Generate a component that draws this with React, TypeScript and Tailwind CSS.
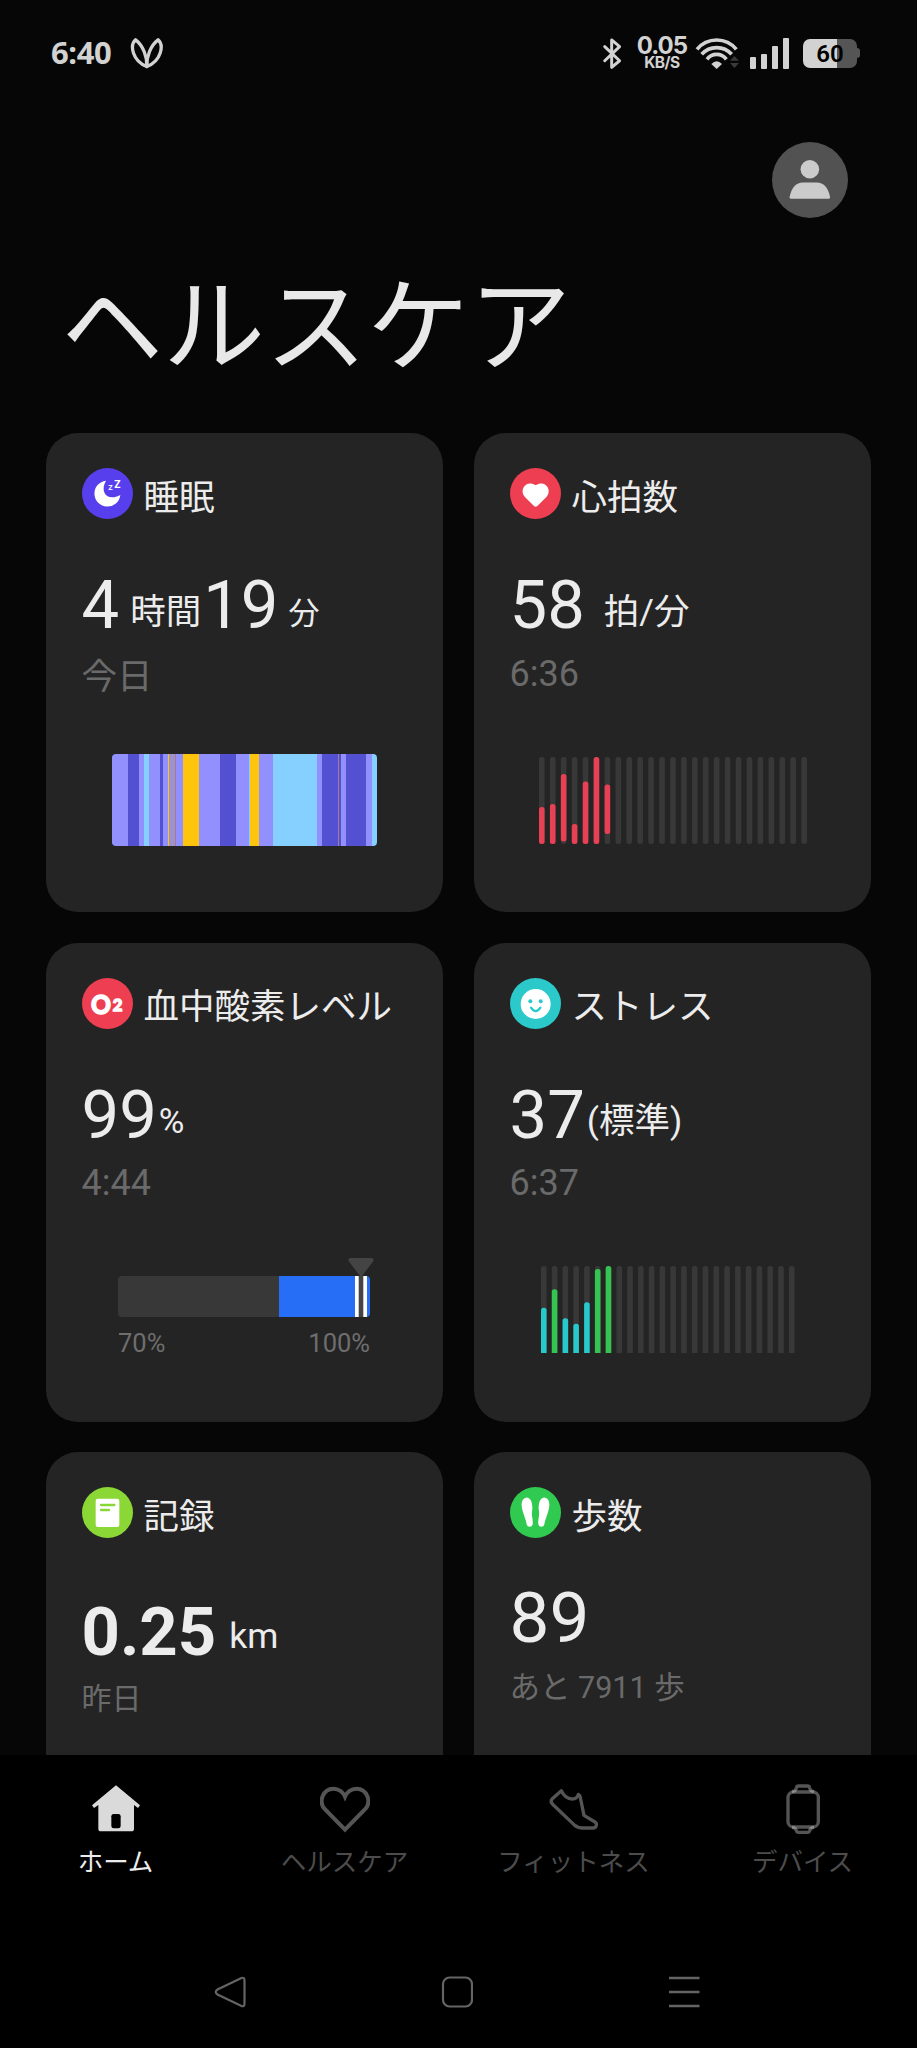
import type { ReactNode } from "react";

const sleepStages = [
  { stage: "light", span: 48 },
  { stage: "deep", span: 32 },
  { stage: "light", span: 15 },
  { stage: "rem", span: 16 },
  { stage: "light", span: 34 },
  { stage: "deep", span: 8 },
  { stage: "light", span: 14 },
  { stage: "awake", span: 5 },
  { stage: "mixed", span: 17 },
  { stage: "brief", span: 3 },
  { stage: "light", span: 21 },
  { stage: "awake", span: 48 },
  { stage: "light", span: 62 },
  { stage: "deep", span: 50 },
  { stage: "light", span: 37 },
  { stage: "rem", span: 4 },
  { stage: "awake", span: 28 },
  { stage: "light", span: 40 },
  { stage: "rem", span: 133 },
  { stage: "light", span: 16 },
  { stage: "deep", span: 48 },
  { stage: "brief", span: 3 },
  { stage: "deep", span: 4 },
  { stage: "light", span: 17 },
  { stage: "deep", span: 59 },
  { stage: "light", span: 18 },
  { stage: "rem", span: 15 },
];

const stageColors: Record<string, string> = {
  light: "bg-[#9290ff]",
  deep: "bg-[#5450d2]",
  rem: "bg-[#86d0ff]",
  awake: "bg-[#ffc40e]",
  mixed: "bg-[#9d92cf]",
  brief: "bg-[#a87c86]",
};

const heartBars = [
  { top: 50, bottom: 87, color: "#e84055" },
  { top: 47, bottom: 87, color: "#e84055" },
  { top: 17, bottom: 84.5, color: "#e84055" },
  { top: 67, bottom: 87, color: "#e84055" },
  { top: 24.5, bottom: 87, color: "#e84055" },
  { top: 0, bottom: 87, color: "#e84055" },
  { top: 27.5, bottom: 77, color: "#e84055" },
];

const stressBars = [
  { top: 41.7, bottom: 87, color: "#28c9cb" },
  { top: 23.3, bottom: 87, color: "#35c352" },
  { top: 52.3, bottom: 87, color: "#28c9cb" },
  { top: 57.7, bottom: 87, color: "#28c9cb" },
  { top: 36.3, bottom: 87, color: "#28c9cb" },
  { top: 3, bottom: 87, color: "#35c352" },
  { top: 0, bottom: 87, color: "#35c352" },
];

function StatusBar() {
  return (
    <div className="flex h-[106px] shrink-0 items-center justify-between pr-[57px] pl-[51px]">
      <div className="flex items-center gap-[19px]">
        <span className="pb-[2px] font-['Noto_Sans'] text-[31px] leading-none font-bold tracking-[-0.4px] text-[#d2d2d2]">
          6:40
        </span>
        <svg
          width="33"
          height="32"
          viewBox="0 0 100 96"
          fill="none"
          stroke="#d2d2d2"
          strokeWidth="10"
          strokeLinejoin="round"
        >
          <path d="M17 8C-2 25 8 72 51 89C52 60 40 25 17 8Z" />
          <path d="M85 8C104 25 94 72 51 89C50 60 62 25 85 8Z" />
        </svg>
      </div>
      <div className="flex items-center">
        <svg
          width="20"
          height="33"
          viewBox="0 0 60 100"
          fill="none"
          stroke="#d2d2d2"
          strokeWidth="9"
          strokeLinecap="round"
          strokeLinejoin="round"
        >
          <path d="M8 29L53 72L29 92V9L53 29L8 72" />
        </svg>
        <div className="ml-[14px] flex w-[52px] flex-col items-center pt-[1px] font-['Inter'] font-bold text-[#d2d2d2]">
          <span className="text-[24px] leading-[18px] tracking-[-1px]">
            0.05
          </span>
          <span className="text-[15.5px] leading-[15px] tracking-[-0.5px]">
            KB/S
          </span>
        </div>
        <svg
          className="ml-[7px]"
          width="45"
          height="33"
          viewBox="0 0 135 99"
          fill="none"
          stroke="#d2d2d2"
          strokeWidth="11"
        >
          <path d="M6 37A76 76 0 0 1 124 37" />
          <path d="M20 52A60 60 0 0 1 110 52" />
          <path d="M36 67A36 36 0 0 1 94 67" />
          <path d="M65 96L49 81Q65 64 81 81Z" fill="#d2d2d2" stroke="none" />
          <path d="M105 71L118 57L132 71ZM105 78L118 93L132 78Z" fill="#3a3a3a" stroke="none" />
        </svg>
        <div className="ml-[10px] flex h-[31px] items-end gap-[5px]">
          <span className="h-[12px] w-[6px] rounded-[1px] bg-[#d2d2d2]" />
          <span className="h-[15px] w-[6px] rounded-[1px] bg-[#d2d2d2]" />
          <span className="h-[23px] w-[6px] rounded-[1px] bg-[#d2d2d2]" />
          <span className="h-[31px] w-[6px] rounded-[1px] bg-[#d2d2d2]" />
        </div>
        <div className="ml-[14px] flex items-center">
          <div className="flex h-[29px] w-[54px] items-center justify-center rounded-[7px] bg-linear-to-r from-[#d2d2d2] from-[34px] to-[#555] to-[34px] pt-[2px] font-['Roboto'] text-[24px] leading-none font-semibold text-black">
            60
          </div>
          <span className="h-[10px] w-[3px] rounded-r-full bg-[#555]" />
        </div>
      </div>
    </div>
  );
}

function Avatar() {
  return (
    <svg width="76" height="76" viewBox="0 0 229 229">
      <circle cx="114.5" cy="114.5" r="114.5" fill="#525252" />
      <g fill="#cbcbcb">
        <circle cx="114" cy="82" r="28" />
        <path d="M57 171Q52 171 53 166C59 136 74 122 92 122H136C154 122 169 136 175 166Q176 171 171 171Z" />
      </g>
    </svg>
  );
}

function Badge({ color, children }: { color: string; children: ReactNode }) {
  return (
    <svg className="shrink-0" width="51" height="51" viewBox="0 0 153 153">
      <circle cx="76.5" cy="76.5" r="76.5" fill={color} />
      {children}
    </svg>
  );
}

function Card({
  icon,
  title,
  children,
  chart,
}: {
  icon: ReactNode;
  title: string;
  children: ReactNode;
  chart?: ReactNode;
}) {
  return (
    <section className="flex h-[479px] flex-col rounded-[32px] bg-[#242424] pt-[35px]">
      <div className="flex h-[285px] shrink-0 flex-col px-[35.5px]">
        <div className="flex h-[51px] shrink-0 items-center gap-[11px]">
          {icon}
          <h2 className="pt-[10px] text-[35.5px] leading-none whitespace-nowrap text-[#ececec]">
            {title}
          </h2>
        </div>
        {children}
      </div>
      {chart}
    </section>
  );
}

type Bar = { top: number; bottom: number; color: string };

function BarChart({
  bars,
  count,
  pitch,
  flat = false,
}: {
  bars: Bar[];
  count: number;
  pitch: number;
  flat?: boolean;
}) {
  const width = 5.6;
  return (
    <svg width={pitch * (count - 1) + width} height="87">
      {Array.from({ length: count }, (_, i) => (
        <rect
          key={i}
          x={i * pitch}
          width={width}
          height={flat ? 92 : 87}
          rx="2.5"
          fill="#383838"
        />
      ))}
      {bars.map((bar, i) => (
        <rect
          key={i}
          x={i * pitch}
          y={bar.top}
          width={width}
          height={bar.bottom - bar.top + (flat ? 5 : 0)}
          rx="2.5"
          fill={bar.color}
        />
      ))}
    </svg>
  );
}

function SleepChart() {
  return (
    <div className="mt-[1px] ml-[66px] flex h-[92px] w-[265px] overflow-hidden rounded-[4px]">
      {sleepStages.map((item, i) => (
        <span
          key={i}
          className={`h-full ${stageColors[item.stage]}`}
          style={{ width: `${(item.span / 795) * 100}%` }}
        />
      ))}
    </div>
  );
}

function OxygenChart() {
  return (
    <div className="mt-[-5px] ml-[72px] w-[252px]">
      <svg width="257" height="60" className="max-w-none">
        <defs>
          <clipPath id="oxygen-track">
            <rect y="18" width="252" height="41" rx="4" />
          </clipPath>
        </defs>
        <g clipPath="url(#oxygen-track)">
          <rect y="18" width="252" height="41" fill="#383838" />
          <rect x="161" y="18" width="91" height="41" fill="#276ef6" />
          <rect x="237" y="18" width="12" height="41" fill="#fff" />
          <rect x="240.7" y="18" width="4.6" height="41" fill="#444" />
        </g>
        <path
          d="M233 0H253Q257 0 255 3.5L244.5 17.5Q243 19.5 241.5 17.5L231 3.5Q229 0 233 0Z"
          fill="#444"
        />
      </svg>
      <div className="mt-[13px] flex justify-between text-[25.5px] leading-none text-[#6e6e6e]">
        <span>70%</span>
        <span>100%</span>
      </div>
    </div>
  );
}

function Cards() {
  return (
    <div className="grid grid-cols-[397px_397px] gap-x-[31px] gap-y-[30.5px] pl-[46px] text-[#ececec]">
      <Card
        title="睡眠"
        icon={
          <Badge color="#583fee">
            <path d="M72 38A39 39 0 1 0 115 81C76 102 52 72 72 38Z" fill="#fff" />
            <g fill="#fff" fontFamily="Roboto" fontWeight="700">
              <text x="79" y="67" fontSize="22">Z</text>
              <text x="97" y="61" fontSize="31">Z</text>
            </g>
          </Badge>
        }
        chart={<SleepChart />}
      >
        <div className="mt-[53px] flex h-[67px] items-end leading-none">
          <span className="text-[67px]">4</span>
          <span className="mb-[9px] ml-[11px] text-[35.5px]">時間</span>
          <span className="ml-[2px] text-[67px]">19</span>
          <span className="mb-[10px] ml-[10px] text-[31px]">分</span>
        </div>
        <p className="mt-[21px] text-[35.5px] leading-none text-[#6a6a6a]">今日</p>
      </Card>

      <Card
        title="心拍数"
        icon={
          <Badge color="#ee3e52">
            <path
              d="M72 114L44 86C26 64 50 34 77 52C104 34 128 64 110 86L82 114Q77 119 72 114Z"
              fill="#fff"
            />
          </Badge>
        }
        chart={
          <div className="mt-[3.5px] ml-[65px]">
            <BarChart bars={heartBars} count={25} pitch={10.93} />
          </div>
        }
      >
        <div className="mt-[53px] flex h-[67px] items-end leading-none">
          <span className="text-[67px]">58</span>
          <span className="mb-[9px] ml-[19px] text-[35.5px]">拍/分</span>
        </div>
        <p className="mt-[17px] text-[36px] leading-none text-[#6a6a6a]">6:36</p>
      </Card>

      <Card
        title="血中酸素レベル"
        icon={
          <Badge color="#ee3e52">
            <g
              fill="#fff"
              stroke="#fff"
              strokeWidth="4"
              fontFamily="Lato"
              fontWeight="900"
            >
              <text x="27" y="107" fontSize="80" textLength="60" lengthAdjust="spacingAndGlyphs">O</text>
              <text x="92" y="100" fontSize="50">2</text>
            </g>
          </Badge>
        }
        chart={<OxygenChart />}
      >
        <div className="mt-[53px] flex h-[67px] items-end leading-none">
          <span className="text-[67px]">99</span>
          <span className="mb-[10px] ml-[2px] text-[35px]">%</span>
        </div>
        <p className="mt-[16px] text-[36px] leading-none text-[#6a6a6a]">4:44</p>
      </Card>

      <Card
        title="ストレス"
        icon={
          <Badge color="#2bc9c9">
            <circle cx="77" cy="78" r="45" fill="#fff" />
            <circle cx="61" cy="70" r="6" fill="#2bc9c9" />
            <circle cx="92" cy="70" r="6" fill="#2bc9c9" />
            <path
              d="M63 89Q77 110 91 89"
              fill="none"
              stroke="#2bc9c9"
              strokeWidth="7"
              strokeLinecap="round"
            />
          </Badge>
        }
        chart={
          <div className="mt-[3px] ml-[67px]">
            <BarChart bars={stressBars} count={24} pitch={10.78} flat />
          </div>
        }
      >
        <div className="mt-[53px] flex h-[67px] items-end leading-none">
          <span className="text-[67px]">37</span>
          <span className="mb-[9.5px] ml-[2px] text-[35.5px]">(標準)</span>
        </div>
        <p className="mt-[16px] text-[36px] leading-none text-[#6a6a6a]">6:37</p>
      </Card>

      <Card
        title="記録"
        icon={
          <Badge color="#8ad735">
            <rect x="41" y="35" width="71" height="85" rx="7" fill="#fff" />
            <path
              d="M57 54H97M57 69H81"
              stroke="#8ad735"
              strokeWidth="7"
              strokeLinecap="round"
            />
          </Badge>
        }
      >
        <div className="mt-[61px] flex h-[67px] items-end leading-none">
          <span className="text-[67px] font-bold">0.25</span>
          <span className="mb-[12px] ml-[13px] text-[35.5px]">km</span>
        </div>
        <p className="mt-[18px] text-[30px] leading-none text-[#6a6a6a]">昨日</p>
      </Card>

      <Card
        title="歩数"
        icon={
          <Badge color="#30ca50">
            <g fill="#fff">
              <path d="M48 32C62 30 70 50 66 74C64 86 70 98 68 112C66 122 52 122 50 112C48 98 40 82 37 68C32 48 36 34 48 32Z" />
              <path
                d="M48 32C62 30 70 50 66 74C64 86 70 98 68 112C66 122 52 122 50 112C48 98 40 82 37 68C32 48 36 34 48 32Z"
                transform="translate(153) scale(-1 1)"
              />
            </g>
          </Badge>
        }
      >
        <span className="mt-[44px] text-[71px] leading-none">89</span>
        <p className="mt-[20px] text-[30.5px] leading-none text-[#6a6a6a]">
          あと 7911 歩
        </p>
      </Card>
    </div>
  );
}

const tabs = [
  {
    label: "ホーム",
    active: true,
    icon: (
      <>
        <path
          d="M75 4L147 64L141 72L129 63V134Q129 142 121 142H30Q22 142 22 134V63L9 72L3 64Z"
          fill="#dadada"
        />
        <rect x="61" y="90" width="28" height="43" rx="7" fill="#000" />
      </>
    ),
  },
  {
    label: "ヘルスケア",
    icon: (
      <path
        d="M75 137L14 75C-6 52 10 14 40 14C57 14 70 26 75 38C80 26 93 14 110 14C140 14 156 52 136 75Z"
        stroke="#555"
        strokeWidth="12"
      />
    ),
  },
  {
    label: "フィットネス",
    icon: (
      <path
        d="M37 20C43 34 54 45 70 45Q84 45 88 31L93 36L105 94L138 114Q144 118 142 124Q140 132 132 132H102Q86 132 75 122L10 60Q3 52 10 44Z"
        stroke="#555"
        strokeWidth="10"
        strokeLinejoin="round"
      />
    ),
  },
  {
    label: "デバイス",
    icon: (
      <g stroke="#fff" strokeOpacity="0.33" strokeWidth="10">
        <rect x="30" y="24" width="91" height="105" rx="16" />
        <path d="M42 23Q53 22 55 12Q56 6 62 6H88Q94 6 95 12Q97 22 108 23" />
        <path d="M42 130Q53 131 55 140Q56 145 62 145H88Q94 145 95 140Q97 131 108 130" />
      </g>
    ),
  },
];

function TabBar() {
  return (
    <nav className="grid h-[175px] shrink-0 grid-cols-4 pt-[29px] pl-[1px]">
      {tabs.map((tab) => (
        <div key={tab.label} className="flex flex-col items-center">
          <svg width="50" height="50" viewBox="0 0 150 150" fill="none">
            {tab.icon}
          </svg>
          <span
            className={`mt-[16px] text-[25.5px] leading-none whitespace-nowrap ${
              tab.active ? "text-[#ececec]" : "text-[#4c4c4c]"
            }`}
          >
            {tab.label}
          </span>
        </div>
      ))}
    </nav>
  );
}

function SystemNav() {
  return (
    <div className="flex h-[118px] items-center justify-center gap-[195px] pt-[6px] pr-[4px]">
      <svg width="32" height="32" fill="none" stroke="#646464" strokeWidth="2.2">
        <path d="M27.5 2L3.5 13.5Q0 16 3.5 18.5L27.5 30Q30.5 31 30.5 27.5V4.5Q30.5 1 27.5 2Z" />
      </svg>
      <svg width="32" height="32" fill="none" stroke="#646464" strokeWidth="2.2">
        <rect x="2" y="1.5" width="29" height="29" rx="6.5" />
      </svg>
      <svg width="32" height="32" stroke="#646464" strokeWidth="2.3">
        <path d="M1 2H31.5M1 16H31.5M1 30H31.5" />
      </svg>
    </div>
  );
}

export default function App() {
  return (
    <div className="flex h-[2048px] w-[917px] flex-col overflow-hidden bg-black font-['Roboto','Noto_Sans_CJK_JP',sans-serif]">
      <main className="flex h-[1755px] shrink-0 flex-col overflow-hidden bg-[#060606]">
        <StatusBar />
        <header className="flex h-[327px] shrink-0 flex-col pt-[36px]">
          <div className="flex justify-end pr-[69px]">
            <Avatar />
          </div>
          <h1 className="mt-[59px] pl-[61px] text-[102px] leading-none text-[#e8e8e8]">
            ヘルスケア
          </h1>
        </header>
        <Cards />
      </main>
      <TabBar />
      <SystemNav />
    </div>
  );
}
